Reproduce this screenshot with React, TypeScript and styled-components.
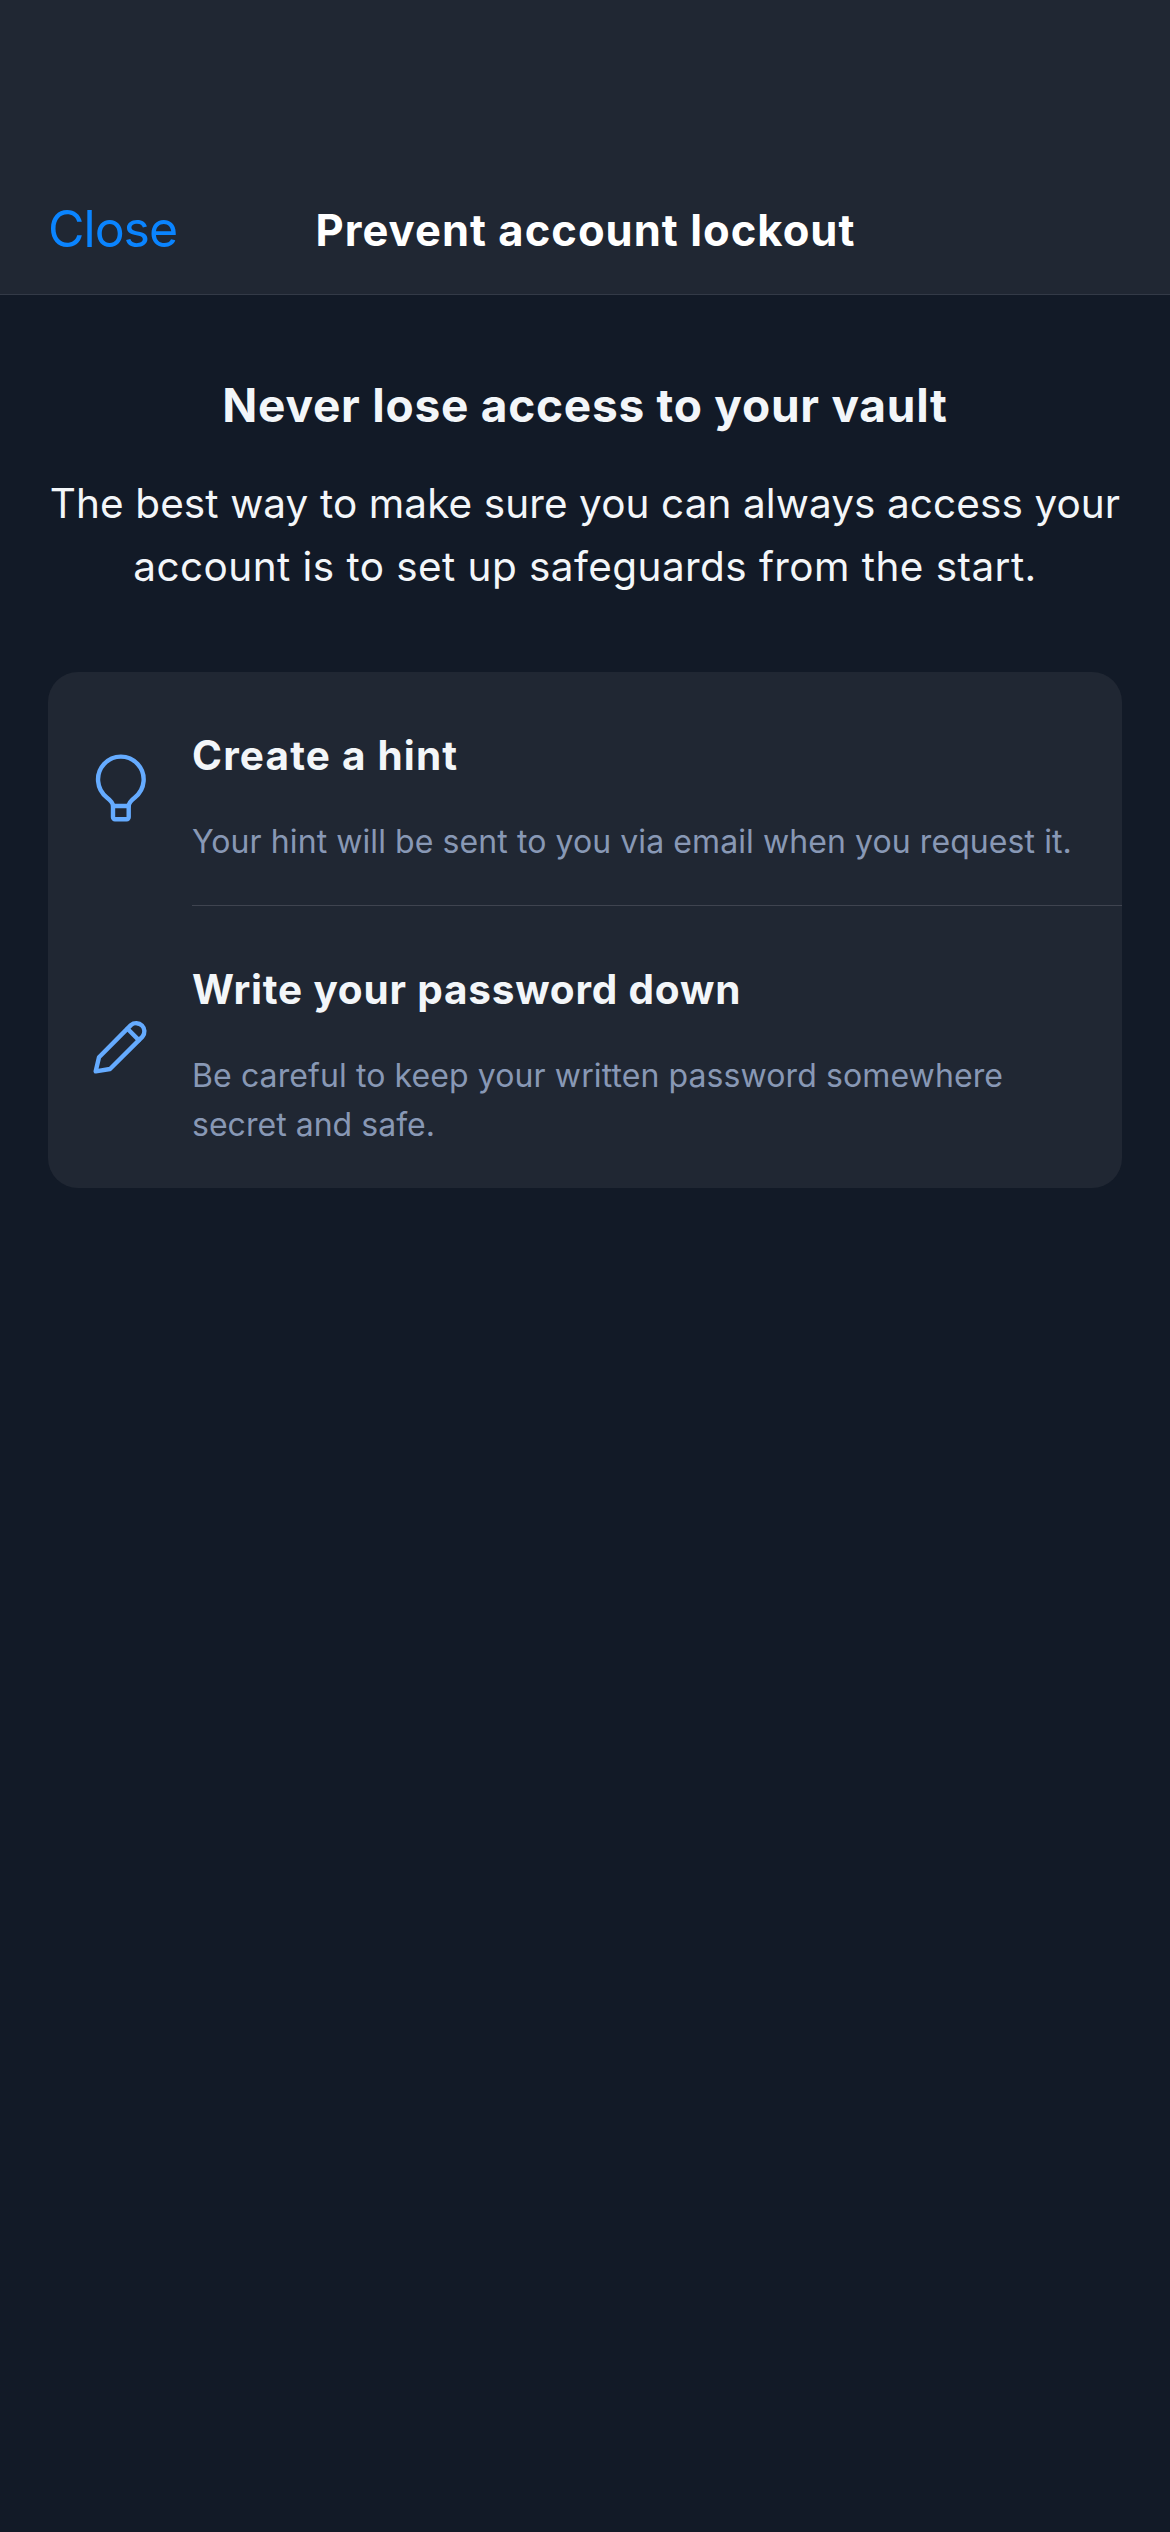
import React from "react";
import styled, { createGlobalStyle } from "styled-components";

const GlobalStyle = createGlobalStyle`
  *, *::before, *::after { box-sizing: border-box; }
  body {
    margin: 0;
    background: #121a27;
    font-family: Inter, "Liberation Sans", sans-serif;
    font-variant-ligatures: none;
    font-feature-settings: "calt" 0;
    -webkit-font-smoothing: antialiased;
  }
`;

const Screen = styled.main`
  display: flex;
  flex-direction: column;
  min-height: 2532px;
  background: #121a27;
  color: #f3f6f9;
`;

const NavBar = styled.header`
  display: grid;
  grid-template-columns: 1fr auto 1fr;
  align-items: center;
  height: 295px;
  padding: 165px 48px 0;
  background: #202733;
  border-bottom: 1px solid #333a47;
`;

const CloseButton = styled.button`
  justify-self: start;
  padding: 0 0 2px;
  border: 0;
  background: none;
  color: #0a84ff;
  font-family: inherit;
  font-size: 50px;
  line-height: 60px;
  letter-spacing: -1px;
  cursor: pointer;
`;

const NavTitle = styled.h1`
  margin: 0;
  padding: 1px 0 0 1px;
  color: #ffffff;
  font-size: 43.5px;
  font-weight: 700;
  line-height: 60px;
  letter-spacing: 1.04px;
`;

const Content = styled.section`
  display: flex;
  flex-direction: column;
  padding: 80px 48px 0;
`;

const Heading = styled.h2`
  margin: 0 0 37px;
  font-size: 46px;
  font-weight: 700;
  line-height: 60px;
  letter-spacing: 0.75px;
  text-align: center;
`;

const Intro = styled.p`
  margin: 0 0 74px;
  font-size: 40.5px;
  line-height: 63px;
  text-align: center;
`;

const TextLine = styled.span<{ $tracking: number }>`
  display: block;
  white-space: nowrap;
  letter-spacing: ${(p) => p.$tracking}px;
`;

const Card = styled.ul`
  margin: 0;
  padding: 0;
  list-style: none;
  border-radius: 30px;
  background: #202733;
  overflow: hidden;
`;

const Row = styled.li`
  display: grid;
  grid-template-columns: 144px 1fr;
  align-items: center;
`;

const IconCell = styled.span`
  display: flex;
  justify-content: center;
  color: #65abff;
`;

const RowBody = styled.div<{ $divided?: boolean }>`
  display: flex;
  flex-direction: column;
  gap: 34px;
  padding: 57px 0 39px;
  border-bottom: ${(p) => (p.$divided ? "1px solid #3f4450" : "0")};
`;

const RowTitle = styled.h3<{ $tracking: number }>`
  margin: 0;
  font-size: 40.5px;
  font-weight: 700;
  line-height: 54px;
  letter-spacing: ${(p) => p.$tracking}px;
`;

const RowText = styled.p`
  margin: 0;
  color: #8898b5;
  font-size: 32px;
  line-height: 49px;
`;

const Glyph = styled.svg`
  display: block;
  width: 72px;
  height: 72px;
  fill: none;
  stroke: currentColor;
  stroke-width: 4.4;
  stroke-linecap: round;
  stroke-linejoin: round;
`;

const LightbulbIcon = () => (
  <Glyph viewBox="0 0 72 72" aria-hidden="true">
    <path d="M29 53C29 49.5 26.5 47.2 22.8 44.4A22.8 22.8 0 1 1 50.9 44.4C47.2 47.2 44.7 49.5 44.7 53V64.3A2 2 0 0 1 42.7 66.3H31A2 2 0 0 1 29 64.3Z" />
    <path d="M29 53H44.7" />
  </Glyph>
);

const PencilIcon = () => (
  <Glyph viewBox="0 0 72 72" aria-hidden="true">
    <path d="M11.7 60.3L15 46.3L46.9 14.1A8.2 8.2 0 0 1 58.5 25.6L26 58Z" />
    <path d="M43.5 17.8L54.8 29.1" />
  </Glyph>
);

interface Tip {
  title: string;
  titleTracking: number;
  lines: { text: string; tracking: number }[];
  icon: React.ReactNode;
}

const tips: Tip[] = [
  {
    title: "Create a hint",
    titleTracking: 1.18,
    lines: [{ text: "Your hint will be sent to you via email when you request it.", tracking: 0.08 }],
    icon: <LightbulbIcon />,
  },
  {
    title: "Write your password down",
    titleTracking: 0.8,
    lines: [
      { text: "Be careful to keep your written password somewhere", tracking: 0.1 },
      { text: "secret and safe.", tracking: 0.03 },
    ],
    icon: <PencilIcon />,
  },
];

export default function App() {
  return (
    <>
      <GlobalStyle />
      <Screen>
        <NavBar>
          <CloseButton type="button">Close</CloseButton>
          <NavTitle>Prevent account lockout</NavTitle>
        </NavBar>
        <Content>
          <Heading>Never lose access to your vault</Heading>
          <Intro>
            <TextLine $tracking={0.09}>The best way to make sure you can always access your</TextLine>
            <TextLine $tracking={0.43}>account is to set up safeguards from the start.</TextLine>
          </Intro>
          <Card>
            {tips.map((tip, i) => (
              <Row key={tip.title}>
                <IconCell>{tip.icon}</IconCell>
                <RowBody $divided={i < tips.length - 1}>
                  <RowTitle $tracking={tip.titleTracking}>{tip.title}</RowTitle>
                  <RowText>
                    {tip.lines.map((line) => (
                      <TextLine key={line.text} $tracking={line.tracking}>
                        {line.text}
                      </TextLine>
                    ))}
                  </RowText>
                </RowBody>
              </Row>
            ))}
          </Card>
        </Content>
      </Screen>
    </>
  );
}
